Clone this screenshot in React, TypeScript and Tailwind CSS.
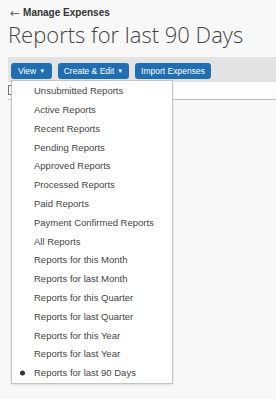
import React from "react";

const REPORT_VIEWS = [
  "Unsubmitted Reports",
  "Active Reports",
  "Recent Reports",
  "Pending Reports",
  "Approved Reports",
  "Processed Reports",
  "Paid Reports",
  "Payment Confirmed Reports",
  "All Reports",
  "Reports for this Month",
  "Reports for last Month",
  "Reports for this Quarter",
  "Reports for last Quarter",
  "Reports for this Year",
  "Reports for last Year",
  "Reports for last 90 Days",
];

const selected = "Reports for last 90 Days";

const ToolbarButton = ({ label, width, caret }: { label: string; width: string; caret?: boolean }) => (
  <button
    className={`${width} h-[16px] rounded-[3px] bg-[#1f6db3] text-white text-[8.5px] leading-[16px] flex items-center justify-center gap-[3px]`}
  >
    {label}
    {caret && <span className="text-[6px] leading-none">▼</span>}
  </button>
);

export default function App() {
  return (
    <div
      className="relative w-full h-[399px] overflow-hidden bg-[#f8f8f8] text-[#333]"
      style={{ fontFamily: '"Liberation Sans", Arial, sans-serif' }}
    >
      {/* header */}
      <div className="mt-[7px] h-[12px] pl-[10px] flex items-center gap-[3px] text-[10px] leading-[12px] font-bold">
        <span className="font-normal text-[12px] text-[#666] leading-[12px]" style={{ fontFamily: '"DejaVu Sans", sans-serif' }}>
          ←
        </span>
        <span>Manage Expenses</span>
      </div>
      <h1
        className="ml-[8px] h-[30px] text-[22px] leading-[30px] font-light text-[#444]"
        style={{ fontFamily: '"Open Sans", sans-serif' }}
      >
        Reports for last 90 Days
      </h1>

      {/* toolbar */}
      <div className="mt-[8px] ml-[8px] h-[25px] bg-[#e3e3e3] pt-[6px] pl-[3px] flex gap-[6px]">
        <ToolbarButton label="View" width="w-[41px]" caret />
        <ToolbarButton label="Create & Edit" width="w-[71px]" caret />
        <ToolbarButton label="Import Expenses" width="w-[76px]" />
      </div>

      {/* table header */}
      <div className="ml-[8px] h-[18px] bg-[#fdfdfd] border-b border-[#bdbdbd] pt-[3px]">
        <div className="w-[10px] h-[10px] border border-[#777] bg-white" />
      </div>

      {/* view menu */}
      <div className="absolute left-[11px] top-[80px] w-[162px] bg-white border border-[#c4c4c4] shadow-[0_1px_2px_rgba(0,0,0,0.12)] pt-[1px]">
        {REPORT_VIEWS.map((item) => (
          <div key={item} className="relative h-[18.8px] pl-[22px] flex items-center text-[9.5px] text-[#444]">
            {item === selected && (
              <span className="absolute left-[8px] top-1/2 -translate-y-1/2 w-[5px] h-[5px] rounded-full bg-[#333]" />
            )}
            {item}
          </div>
        ))}
      </div>
    </div>
  );
}
